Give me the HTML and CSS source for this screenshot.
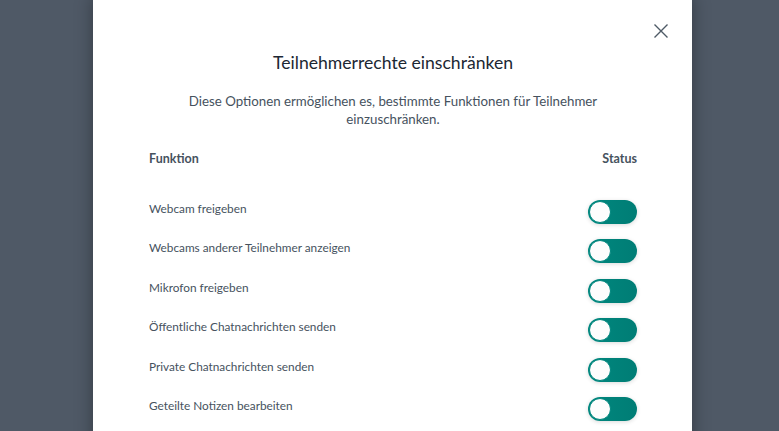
FILE: index.html
```html
<!DOCTYPE html>
<html lang="de">
<head>
    <meta charset="UTF-8">
    <meta name="viewport" content="width=device-width, initial-scale=1.0">
    <title>Teilnehmerrechte einschränken</title>
    <link rel="stylesheet" href="styles.css">
</head>
<body>
    <div class="modal">
        <div class="modal-header">
            <button class="close-button" aria-label="Schließen">
                <svg width="16" height="16" viewBox="0 0 16 16">
                    <path d="M1.5 1.5 L14.5 14.5 M14.5 1.5 L1.5 14.5" stroke="#4e5a66" stroke-width="1.4" fill="none"/>
                </svg>
            </button>
        </div>
        <h2 class="title">Teilnehmerrechte einschränken</h2>
        <p class="description">Diese Optionen ermöglichen es, bestimmte Funktionen für Teilnehmer einzuschränken.</p>

        <div class="table-header">
            <span>Funktion</span>
            <span>Status</span>
        </div>

        <div class="lock-list">
            <div class="lock-row">
                <span class="lock-label">Webcam freigeben</span>
                <span class="toggle"><span class="knob"></span></span>
            </div>
            <div class="lock-row">
                <span class="lock-label">Webcams anderer Teilnehmer anzeigen</span>
                <span class="toggle"><span class="knob"></span></span>
            </div>
            <div class="lock-row">
                <span class="lock-label">Mikrofon freigeben</span>
                <span class="toggle"><span class="knob"></span></span>
            </div>
            <div class="lock-row">
                <span class="lock-label">Öffentliche Chatnachrichten senden</span>
                <span class="toggle"><span class="knob"></span></span>
            </div>
            <div class="lock-row">
                <span class="lock-label">Private Chatnachrichten senden</span>
                <span class="toggle"><span class="knob"></span></span>
            </div>
            <div class="lock-row">
                <span class="lock-label">Geteilte Notizen bearbeiten</span>
                <span class="toggle"><span class="knob"></span></span>
            </div>
        </div>
    </div>
</body>
</html>
```

FILE: styles.css
```css
html, body {
    margin: 0;
    height: 100%;
    overflow: hidden;
}
body {
    background-color: #4f5966;
    font-family: Lato, "Open Sans", sans-serif;
    color: #46525e;
    display: flex;
    justify-content: center;
    align-items: flex-start;
}
.modal {
    width: 599px;
    box-sizing: border-box;
    margin-left: 6px;
    margin-top: -4px;
    padding: 23px 55px 40px 56px;
    background-color: #fff;
    border-radius: 4px;
    box-shadow: 0 0 18px rgba(0, 0, 0, 0.35);
    height: 480px;
    overflow: hidden;
}
.modal-header {
    display: flex;
    justify-content: flex-end;
    height: 24px;
    margin-right: -36px;
}
.close-button {
    width: 24px;
    height: 24px;
    padding: 0;
    border: none;
    background: none;
    display: flex;
    align-items: center;
    justify-content: center;
    cursor: pointer;
}
.title {
    margin: 8px 0 0;
    font-size: 17.6px;
    line-height: 24px;
    font-weight: 400;
    color: #1c2733;
    text-align: center;
}
.description {
    margin: 17px 30px 0;
    font-size: 13.3px;
    line-height: 18px;
    text-align: center;
}
.table-header {
    display: flex;
    justify-content: space-between;
    margin-top: 22px;
    font-size: 12.5px;
    line-height: 18px;
    font-weight: 700;
}
.lock-list {
    display: flex;
    flex-direction: column;
    gap: 15.4px;
    margin-top: 32px;
}
.lock-row {
    display: flex;
    justify-content: space-between;
    align-items: flex-start;
    height: 24px;
}
.lock-label {
    font-size: 11.8px;
    line-height: 18px;
}
.toggle {
    width: 49px;
    height: 24px;
    border-radius: 12px;
    background: linear-gradient(to right, #00877e, #007d75);
    box-shadow: 0 1px 4px rgba(0, 0, 0, 0.15);
    display: flex;
    align-items: center;
}
.knob {
    width: 20px;
    height: 20px;
    margin-left: 1px;
    border-radius: 50%;
    background-color: #fdfdfd;
    border: 1px solid #00877e;
}
```
